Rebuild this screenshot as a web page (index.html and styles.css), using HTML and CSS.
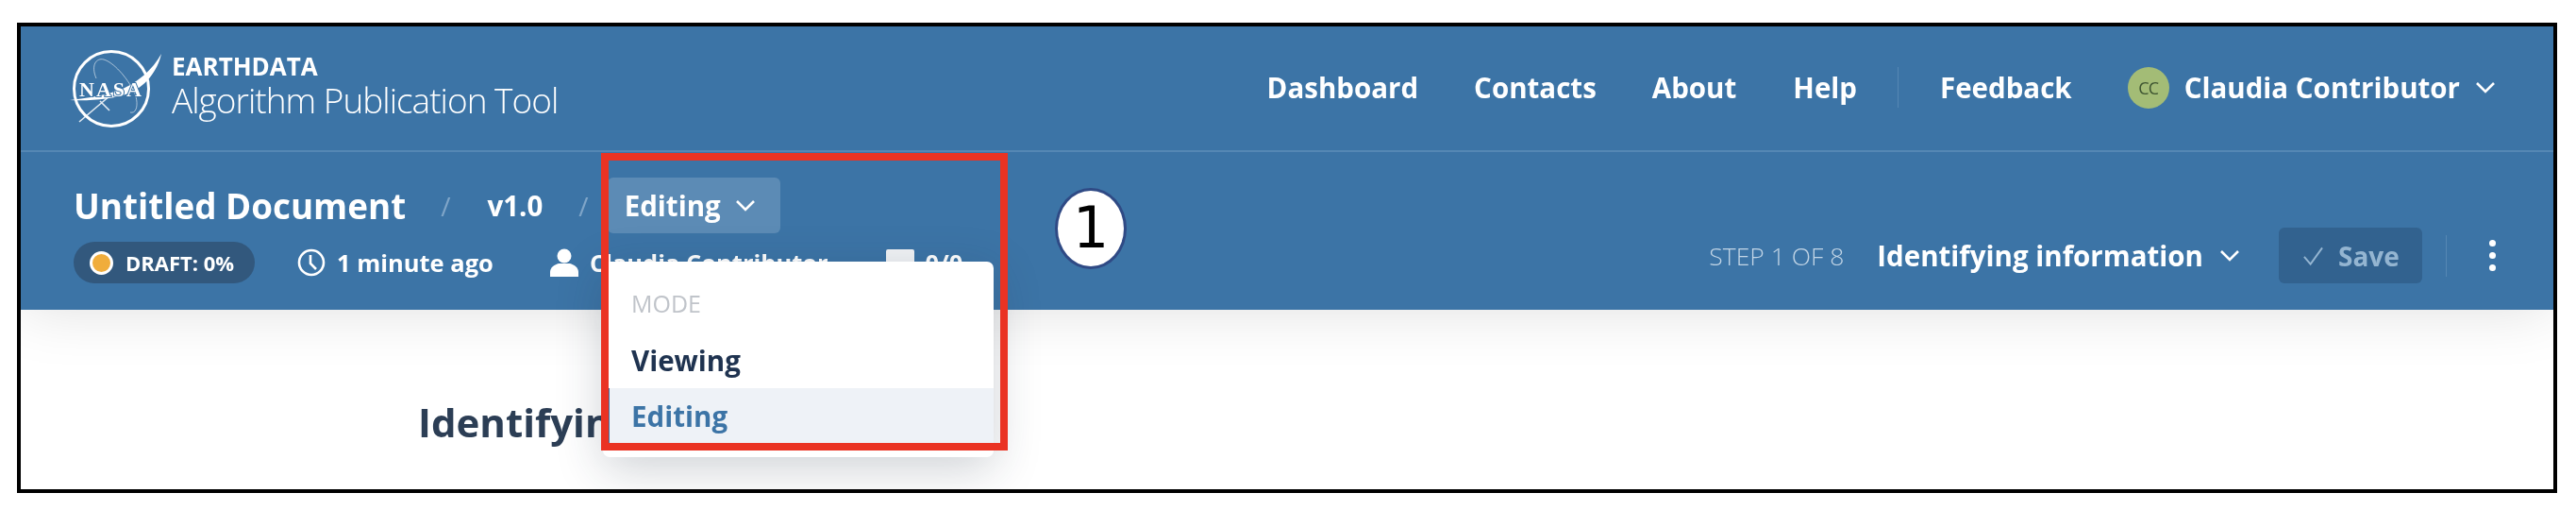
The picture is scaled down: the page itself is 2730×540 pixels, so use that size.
FILE: index.html
```html
<!DOCTYPE html>
<html lang="en">
<head>
<meta charset="utf-8">
<title>Algorithm Publication Tool</title>
<link rel="stylesheet" href="styles.css">
</head>
<body>
<div class="frame">
  <header class="header">
    <div class="top-row">
      <a class="brand">
        <svg class="logo" viewBox="0 0 96 90" aria-hidden="true">
          <circle cx="42" cy="45" r="39.5" fill="none" stroke="#fff" stroke-width="3"/>
          <path d="M26 34c-6-14 0-22 8-20 10 3 24 18 32 34 5 10 4 24-4 22" fill="none" stroke="#fff" stroke-opacity=".55" stroke-width="1"/>
          <path d="M95 8C86 24 70 40 46 48C30 53 14 55-2 57C20 58 44 56 60 50C78 43 91 26 95 8z" fill="#fff"/>
          <path d="M8 80l40-34M30 58l10 10" fill="none" stroke="#fff" stroke-opacity=".85" stroke-width="1.6"/>
          <text class="logo-text" x="42" y="53" text-anchor="middle">NASA</text>
        </svg>
        <span class="brand-text">
          <span class="brand-top">EARTHDATA</span>
          <span class="brand-name">Algorithm Publication Tool</span>
        </span>
      </a>
      <nav class="nav">
        <a class="nav-link nav-dash">Dashboard</a>
        <a class="nav-link nav-contacts">Contacts</a>
        <a class="nav-link nav-about">About</a>
        <a class="nav-link">Help</a>
        <span class="nav-divider"></span>
        <a class="nav-link nav-feedback">Feedback</a>
        <span class="avatar">CC</span>
        <a class="nav-link nav-user">Claudia Contributor</a>
        <svg class="chev" viewBox="0 0 22 14" aria-hidden="true"><path d="M2 2l9 9 9-9"/></svg>
      </nav>
    </div>
    <div class="doc-row">
      <div class="doc-left">
        <div class="crumbs">
          <span class="doc-title">Untitled Document</span>
          <span class="slash slash-a">/</span>
          <span class="version">v1.0</span>
          <span class="slash slash-b">/</span>
          <span class="mode-btn">Editing
            <svg class="chev" viewBox="0 0 22 14" aria-hidden="true"><path d="M2 2l9 9 9-9"/></svg>
          </span>
        </div>
        <div class="meta">
          <span class="badge"><i class="badge-dot"></i>DRAFT: 0%</span>
          <span class="meta-item meta-time">
            <svg class="meta-icon" viewBox="0 0 30 30" aria-hidden="true"><circle cx="15" cy="15" r="13" fill="none" stroke="#fff" stroke-width="2.6"/><path d="M14 7v9l6 6" fill="none" stroke="#fff" stroke-width="2.6"/></svg>
            1 minute ago
          </span>
          <span class="meta-item meta-user">
            <svg class="meta-icon" viewBox="0 0 30 30" aria-hidden="true"><circle cx="15" cy="8" r="7.5" fill="#fff"/><path d="M0 30v-5c0-5 5-8 9-9h12c4 1 9 4 9 9v5z" fill="#fff"/></svg>
            Claudia Contributor
          </span>
          <span class="meta-item meta-comments">
            <svg class="meta-icon" viewBox="0 0 30 30" aria-hidden="true"><path d="M2 1h26a2 2 0 0 1 2 2v19a2 2 0 0 1-2 2H10l-6 6v-6H2a2 2 0 0 1-2-2V3a2 2 0 0 1 2-2z" fill="#f2f4f6"/></svg>
            0/0
          </span>
        </div>
      </div>
      <div class="doc-right">
        <span class="step">STEP 1 OF 8</span>
        <span class="step-name">Identifying information</span>
        <svg class="chev" viewBox="0 0 22 14" aria-hidden="true"><path d="M2 2l9 9 9-9"/></svg>
        <span class="save">
          <svg class="save-check" viewBox="0 0 24 22" aria-hidden="true"><path d="M2 12l7 8L22 2"/></svg>
          Save
        </span>
        <span class="right-divider"></span>
        <span class="dots"><i></i><i></i><i></i></span>
      </div>
    </div>
  </header>
  <main class="content">
    <h1 class="page-title">Identifying information</h1>
  </main>
  <div class="menu">
    <div class="menu-label">MODE</div>
    <div class="menu-item">Viewing</div>
    <div class="menu-item is-active">Editing</div>
  </div>
  <div class="callout-box"></div>
  <div class="callout-num">1</div>
</div>
</body>
</html>
```
FILE: styles.css
```css
* { box-sizing: border-box; }
html, body { margin: 0; background: #fff; }
body { font-family: "Open Sans", "Noto Sans", sans-serif; overflow: hidden; }

.frame {
  position: relative;
  margin: 24px 20px 0 18px;
  height: 498px;
  border: 4px solid #000;
  background: #fff;
  overflow: hidden;
  filter: blur(.5px);
}

.header { background: #3c74a6; color: #fff; height: 300px; box-shadow: 0 0 60px rgba(0,0,0,.13); position: relative; }

.top-row {
  display: flex;
  align-items: center;
  height: 133px;
  padding: 0 61px 2px 53px;
  border-bottom: 2px solid #5587b4;
}
.brand { display: flex; align-items: center; gap: 9px; }
.logo { width: 98px; height: 90px; display: block; margin-top: 2px; overflow: visible; }
.logo-text { font: bold 22px "Liberation Serif", serif; fill: #fff; stroke: #3c74a6; stroke-width: 2px; paint-order: stroke; letter-spacing: 2px; }
.brand-text { display: flex; flex-direction: column; }
.brand-top { font-size: 26px; line-height: 26px; font-weight: 700; }
.brand-name { font-size: 37px; line-height: 46px; font-weight: 300; letter-spacing: -1px; white-space: nowrap; }

.nav { display: flex; align-items: center; margin-left: auto; }
.nav-link { font-size: 29.5px; font-weight: 700; line-height: 40px; white-space: nowrap; }
.nav-dash { margin-right: 59px; }
.nav-contacts { margin-right: 59px; }
.nav-about { margin-right: 60px; }
.nav-divider { width: 1px; height: 43px; background: #5587b4; margin: 0 44px 0 43px; }
.nav-feedback { margin-right: 59px; }
.avatar {
  width: 44px; height: 44px; border-radius: 50%;
  background: #a3bc76; color: #3e5531;
  display: flex; align-items: center; justify-content: center;
  font-size: 18px; letter-spacing: -1px; margin-right: 16px;
}
.chev { width: 22px; height: 14px; fill: none; stroke: #fff; stroke-width: 2.6; flex: none; }
.nav-user + .chev { margin-left: 16px; }

.doc-row {
  display: flex;
  justify-content: space-between;
  height: 167px;
  padding: 27px 61px 0 56px;
}
.crumbs { display: flex; align-items: center; height: 59px; }
.doc-title { font-size: 36.8px; line-height: 44px; font-weight: 700; white-space: nowrap; }
.slash { font-size: 28px; line-height: 40px; color: #7fa5c8; }
.slash-a { margin: 0 39px 0 37px; }
.slash-b { margin: 0 20px 0 38px; }
.version { font-size: 29.5px; line-height: 40px; font-weight: 700; }
.mode-btn {
  display: flex; align-items: center; gap: 15px;
  height: 59px; padding: 0 26px 0 18px;
  background: rgba(255,255,255,.17);
  border-radius: 6px;
  font-size: 29.5px; font-weight: 700;
}
.meta { display: flex; align-items: center; height: 44px; margin-top: 9px; }
.badge {
  display: flex; align-items: center;
  width: 192px; height: 44px; padding-left: 17px;
  background: #32587d; border-radius: 22px;
  font-size: 22px; font-weight: 700; white-space: nowrap;
}
.badge-dot { width: 25px; height: 25px; border-radius: 50%; background: #f0ad3c; border: 3px solid #fff; margin-right: 13px; }
.meta-item { display: flex; align-items: center; font-size: 25.5px; line-height: 34px; font-weight: 700; white-space: nowrap; }
.meta-icon { width: 30px; height: 30px; margin-right: 12px; flex: none; }
.meta-time { margin-left: 45px; }
.meta-user { margin-left: 60px; }
.meta-comments { margin-left: 61px; }

.doc-right { display: flex; align-items: center; height: 59px; margin-top: 53px; }
.step { font-size: 26.5px; font-weight: 300; color: #c2d5e6; margin-right: 35px; white-space: nowrap; }
.step-name { font-size: 29.5px; font-weight: 700; white-space: nowrap; margin-right: 17px; }
.save {
  display: flex; align-items: center;
  width: 152px; height: 59px; padding-left: 25px;
  margin-left: 41px;
  background: #32628f; border-radius: 6px;
  color: #94b5d1; font-size: 28px; font-weight: 700;
}
.save-check { width: 23px; height: 22px; margin-right: 15px; fill: none; stroke: #94b5d1; stroke-width: 2; }
.right-divider { width: 1px; height: 44px; background: #5587b4; margin: 0 45px 0 25px; }
.dots { display: flex; flex-direction: column; gap: 6px; }
.dots i { width: 7px; height: 7px; border-radius: 50%; background: #fff; display: block; }

.page-title { margin: 91px 0 0 421px; font-size: 42px; font-weight: 700; color: #2c3e55; line-height: 56px; white-space: nowrap; }

.menu {
  position: absolute;
  left: 617px; top: 249px;
  width: 414px; height: 207px;
  background: #fff;
  border-radius: 7px;
  box-shadow: 0 12px 50px rgba(30,45,65,.22);
  padding-top: 29px;
}
.menu-label { font-size: 25px; line-height: 30px; color: #c0c4ca; padding-left: 30px; margin-bottom: 16px; }
.menu-item { height: 59px; line-height: 59px; font-size: 29.5px; font-weight: 700; color: #1f3350; padding-left: 30px; }
.is-active { background: #eef2f7; color: #3c74a6; border-left: 7px solid #3c74a6; padding-left: 23px; }

.callout-box {
  position: absolute;
  left: 615px; top: 134px;
  width: 431px; height: 315px;
  border: 8px solid #ea3323;
}
.callout-num {
  position: absolute;
  left: 1096px; top: 171px;
  width: 76px; height: 86px;
  border-radius: 50%;
  background: #fff;
  border: 3px solid #2f4a85;
  color: #000;
  font: 60px/78px "DejaVu Sans", sans-serif;
  text-align: center;
}
```
